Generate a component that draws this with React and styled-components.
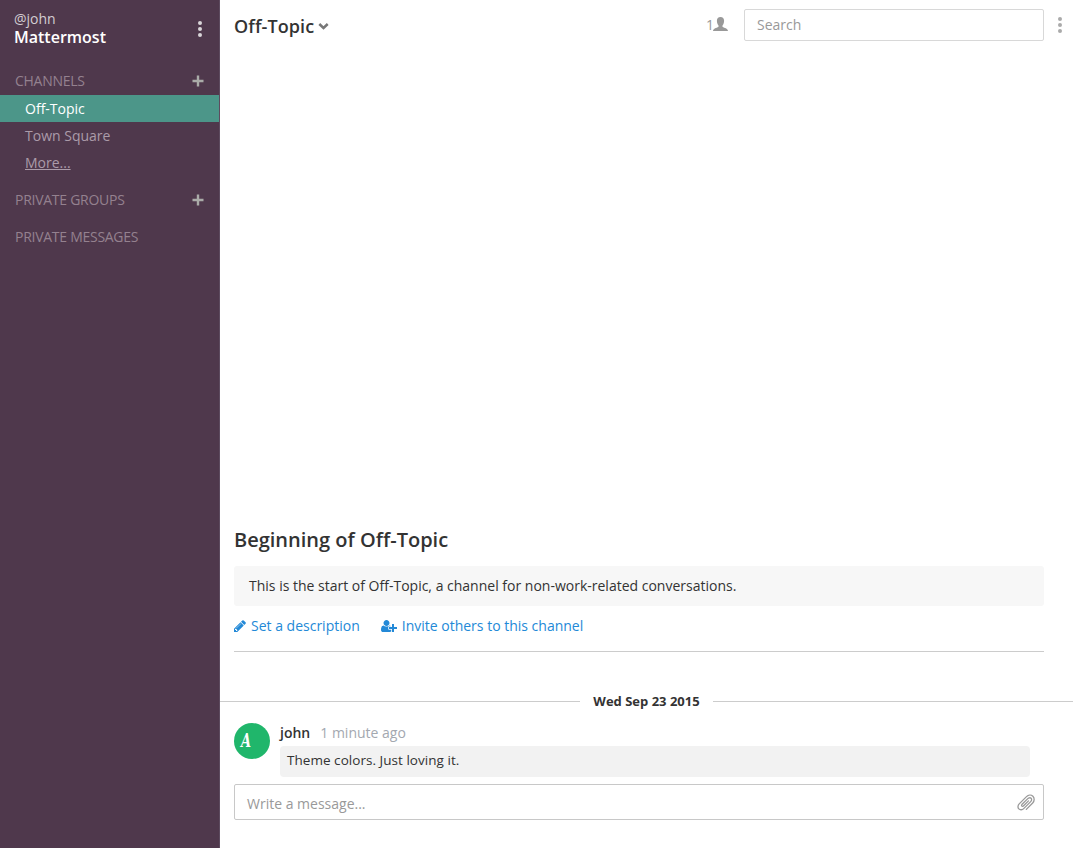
import React from 'react';
import styled, { createGlobalStyle } from 'styled-components';

const GlobalStyle = createGlobalStyle`
  * { box-sizing: border-box; }
  body {
    margin: 0;
    background: #fff;
    color: #333;
    font-family: "Open Sans", sans-serif;
    font-size: 14px;
    line-height: 20px;
    white-space: nowrap;
  }
  svg { display: block; flex: none; }
`;

const Page = styled.div`
  display: flex;
  width: 100%;
  height: 848px;
  overflow: hidden;
`;

const Sidebar = styled.aside`
  width: 220px;
  flex: none;
  background: #4f384c;
  border-right: 1px solid #5d4b5f;
`;

const TeamHeader = styled.header`
  display: flex;
  justify-content: space-between;
  height: 67px;
  padding: 9px 17px 0 14px;
`;

const UserName = styled.div`
  color: #d3cdd2;
  font-size: 14px;
  line-height: 20px;
`;

const TeamName = styled.div`
  color: #fff;
  font-size: 16px;
  font-weight: 600;
  line-height: 16px;
`;

const Dots = styled.div`
  display: flex;
  flex-direction: column;
  gap: 2px;
  margin-top: ${(p) => p.$top}px;
  i {
    width: 4px;
    height: 4px;
    border-radius: 50%;
    background: ${(p) => p.$color};
  }
`;

const Section = styled.section`
  margin-bottom: 10px;
`;

const SectionTitle = styled.h4`
  display: flex;
  align-items: center;
  justify-content: space-between;
  height: 27px;
  margin: 0;
  padding: 0 15px;
  color: #94818f;
  font-size: 14px;
  font-weight: 400;
  letter-spacing: -0.27px;
`;

const ChannelList = styled.nav`
  margin-top: 1px;
`;

const Channel = styled.a`
  display: block;
  height: 27px;
  padding-left: 25px;
  line-height: 27px;
  color: ${(p) => (p.$active ? '#fff' : '#ab9ba9')};
  background: ${(p) => (p.$active ? '#4c9689' : 'transparent')};
  text-decoration: ${(p) => (p.$underline ? 'underline' : 'none')};
`;

const Main = styled.main`
  display: flex;
  flex-direction: column;
  flex: 1;
  min-width: 0;
`;

const ChannelHeader = styled.header`
  display: flex;
  height: 56px;
  padding: 9px 11px 0 14px;
`;

const ChannelTitle = styled.h2`
  display: flex;
  align-items: center;
  flex: 1;
  gap: 4px;
  height: 34px;
  margin: 0;
  font-size: 18px;
  font-weight: 600;
  letter-spacing: 0.1px;
`;

const Members = styled.div`
  display: flex;
  align-items: flex-start;
  margin-right: 16px;
  padding-top: 6px;
  color: #999;
  svg { margin: 2px 0 0 -1px; }
`;

const SearchBox = styled.div`
  width: 300px;
  height: 32px;
  margin-right: 14px;
  padding: 5px 12px;
  border: 1px solid #d8d8d8;
  border-radius: 2px;
  color: #999;
`;

const Feed = styled.div`
  display: flex;
  flex: 1;
  flex-direction: column;
  justify-content: flex-end;
`;

const Intro = styled.section`
  height: 126px;
  margin: 0 29px 39px 14px;
  border-bottom: 1px solid #ccc;
`;

const IntroTitle = styled.h3`
  margin: 0 0 12px;
  font-size: 20px;
  font-weight: 600;
  line-height: 28px;
`;

const IntroNote = styled.p`
  height: 40px;
  margin: 0 0 10px;
  padding: 10px 15px;
  border-radius: 3px;
  background: #f7f7f7;
`;

const IntroActions = styled.div`
  display: flex;
  gap: 21px;
`;

const Action = styled.a`
  display: flex;
  align-items: center;
  gap: 5px;
  color: #2389d7;
`;

const DateDivider = styled.div`
  display: flex;
  align-items: center;
  gap: 13px;
  height: 20px;
  margin-bottom: 12px;
  font-size: 13px;
  font-weight: 700;
  &::before, &::after {
    content: "";
    flex: 1;
    height: 1px;
    background: #ccc;
  }
`;

const Post = styled.article`
  display: flex;
  gap: 10px;
  height: 54px;
  margin: 0 43px 7px 14px;
`;

const Avatar = styled.div`
  width: 36px;
  height: 36px;
  flex: none;
  padding: 0 0 0 7px;
  border-radius: 50%;
  background: #20b66b;
  color: #fff;
  font: italic 700 18px/36px "DejaVu Serif Condensed", "DejaVu Serif", serif;
  font-stretch: condensed;
  span {
    display: inline-block;
    transform: scaleX(0.8);
    transform-origin: left;
  }
`;

const PostBody = styled.div`
  flex: 1;
`;

const PostMeta = styled.div`
  display: flex;
  gap: 10px;
  height: 23px;
  b { font-weight: 600; }
  time { color: #a3a8b0; }
`;

const Bubble = styled.p`
  height: 31px;
  margin: 0;
  padding: 4px 7px;
  border-radius: 4px;
  background: #f2f2f2;
  font-size: 13.5px;
  letter-spacing: 0.04px;
`;

const Composer = styled.div`
  display: flex;
  align-items: center;
  justify-content: space-between;
  height: 36px;
  margin: 0 29px 28px 14px;
  padding: 3px 8px 0 12px;
  border: 1px solid #c8c8c8;
  border-radius: 2px;
  color: #999;
  svg { margin-bottom: 2px; }
`;

function MenuDots({ color, top }) {
  return (
    <Dots $color={color} $top={top}>
      <i /><i /><i />
    </Dots>
  );
}

function PlusIcon() {
  return (
    <svg width="12" height="12" viewBox="0 0 12 12" fill="#aaaba8">
      <path d="M4.800 .5h2.400v4.300h4.300v2.400H7.200v4.300H4.800V7.200H.5V4.800h4.300z" />
    </svg>
  );
}

function ChevronIcon() {
  return (
    <svg width="11" height="8" viewBox="0 0 11 8" fill="none" stroke="#777" strokeWidth="2.5">
      <path d="M1.300 2 5.500 6 9.700 2" />
    </svg>
  );
}

function PersonIcon() {
  return (
    <svg width="15" height="15" viewBox="0 0 15 15" fill="#999">
      <path d="M7.500 0C5.200 0 3.900 1.600 3.900 3.700c0 1.900.5 3.500 1.600 4.700v1.400C5.500 10.700 0 11 0 14h15c0-3-5.500-3.300-5.500-4.200V8.400c1.100-1.200 1.600-2.800 1.600-4.700C11.100 1.600 9.800 0 7.500 0z" />
    </svg>
  );
}

function PencilIcon() {
  return (
    <svg width="12" height="12" viewBox="128 128 1536 1536" fill="currentColor">
      <path d="M491 1536l91-91-235-235-91 91v107h128v128h107zm523-928q0-22-22-22-10 0-17 7l-542 542q-7 7-7 17 0 22 22 22 10 0 17-7l542-542q7-7 7-17zm-54-192l416 416-832 832h-416v-416zm683 96q0 53-37 90l-166 166-416-416 166-165q36-38 90-38 53 0 91 38l235 234q37 39 37 91z" />
    </svg>
  );
}

function UserPlusIcon() {
  return (
    <svg width="16" height="14" viewBox="0 0 2048 1792" fill="currentColor">
      <path d="M704 896q-159 0-271.5-112.5t-112.5-271.5 112.5-271.5 271.5-112.5 271.5 112.5 112.5 271.5-112.5 271.5-271.5 112.5zm960 128h352q13 0 22.5 9.500t9.500 22.500v192q0 13-9.500 22.500t-22.500 9.500h-352v352q0 13-9.500 22.500t-22.500 9.500h-192q-13 0-22.500-9.500t-9.500-22.500v-352h-352q-13 0-22.500-9.500t-9.500-22.500v-192q0-13 9.500-22.500t22.500-9.500h352v-352q0-13 9.500-22.500t22.500-9.500h192q13 0 22.500 9.500t9.500 22.500v352zm-736 224q0 52 38 90t90 38h256v238q-68 50-171 50h-874q-121 0-194-69t-73-190q0-53 3.500-103.500t14-109 26.500-108.500 43-97.500 62-81 85.500-53.500 111.500-20q19 0 39 17 79 61 154.500 91.500t164.500 30.500 164.500-30.500 154.500-91.500q20-17 39-17 132 0 217 96h-223q-52 0-90 38t-38 90v192z" />
    </svg>
  );
}

function ClipIcon() {
  return (
    <svg width="18" height="17" viewBox="0 0 18 17" fill="none" stroke="#999" strokeWidth="1.300" strokeLinecap="round">
      <path d="M9.300 15.400 15.700 9C17.500 7.200 17.700 4.100 15.900 2.300 14.100.5 11.300.8 9.500 2.600L2.200 9.900C.8 11.300.5 13.600 1.800 14.900c1.300 1.300 3.500 1.100 4.900-.3l7-7c1-1 1.300-2.400.4-3.300-.9-.9-2.400-.6-3.300.3L5.100 10.300c-.6.6-.7 1.400-.3 1.800.4.4 1.200.3 1.800-.3l4.900-4.900" />
    </svg>
  );
}

export default function App() {
  return (
    <>
      <GlobalStyle />
      <Page>
        <Sidebar>
          <TeamHeader>
            <div>
              <UserName>@john</UserName>
              <TeamName>Mattermost</TeamName>
            </div>
            <MenuDots color="#d9d5d9" top={12} />
          </TeamHeader>
          <Section>
            <SectionTitle>CHANNELS <PlusIcon /></SectionTitle>
            <ChannelList>
              <Channel $active>Off-Topic</Channel>
              <Channel>Town Square</Channel>
              <Channel $underline>More...</Channel>
            </ChannelList>
          </Section>
          <Section>
            <SectionTitle>PRIVATE GROUPS <PlusIcon /></SectionTitle>
          </Section>
          <Section>
            <SectionTitle>PRIVATE MESSAGES</SectionTitle>
          </Section>
        </Sidebar>
        <Main>
          <ChannelHeader>
            <ChannelTitle>Off-Topic <ChevronIcon /></ChannelTitle>
            <Members>1<PersonIcon /></Members>
            <SearchBox>Search</SearchBox>
            <MenuDots color="#aaa" top={8} />
          </ChannelHeader>
          <Feed>
            <Intro>
              <IntroTitle>Beginning of Off-Topic</IntroTitle>
              <IntroNote>This is the start of Off-Topic, a channel for non-work-related conversations.</IntroNote>
              <IntroActions>
                <Action><PencilIcon />Set a description</Action>
                <Action><UserPlusIcon />Invite others to this channel</Action>
              </IntroActions>
            </Intro>
            <DateDivider>Wed Sep 23 2015</DateDivider>
            <Post>
              <Avatar><span>A</span></Avatar>
              <PostBody>
                <PostMeta><b>john</b><time>1 minute ago</time></PostMeta>
                <Bubble>Theme colors. Just loving it.</Bubble>
              </PostBody>
            </Post>
          </Feed>
          <Composer>Write a message... <ClipIcon /></Composer>
        </Main>
      </Page>
    </>
  );
}
